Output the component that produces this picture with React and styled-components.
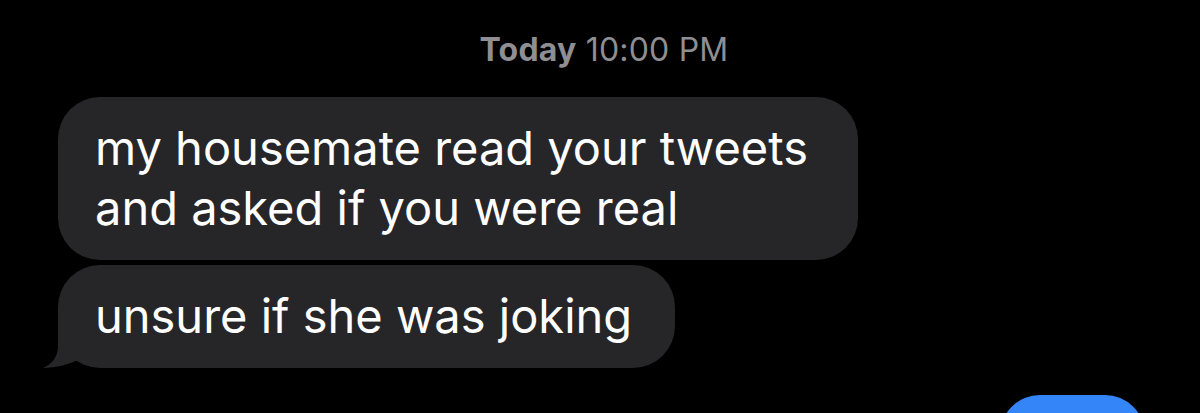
import React from "react";
import styled, { createGlobalStyle } from "styled-components";

const Global = createGlobalStyle`
  html, body { margin: 0; padding: 0; background: #000; }
  body { font-family: Inter, "Liberation Sans", Arial, sans-serif; }
`;

const Screen = styled.div`
  width: 1200px;
  height: 413px;
  overflow: hidden;
  background: #000;
  display: flex;
  flex-direction: column;
`;

const Stamp = styled.div`
  margin-top: 30px;
  padding-left: 8px;
  text-align: center;
  font-size: 32px;
  line-height: 40px;
  letter-spacing: 0.2px;
  color: #8e8e93;
  b { font-weight: 700; }
`;

const Received = styled.div`
  display: flex;
  flex-direction: column;
  align-items: flex-start;
  gap: 5px;
  margin: 27px 0 0 58px;
`;

const Bubble = styled.div`
  position: relative;
  background: #262629;
  color: #fff;
  font-size: 47px;
  line-height: 60px;
  border-radius: 42px;
  padding: 21px ${(p) => p.$right}px 22px 37px;
  white-space: nowrap;
`;

const Tail = styled.svg`
  position: absolute;
  left: -15px;
  bottom: 0;
  width: 40px;
  height: 50px;
`;

const Sent = styled.div`
  align-self: flex-end;
  margin: 27px 55px 0 0;
  width: 145px;
  height: 80px;
  flex-shrink: 0;
  background: #3485f7;
  border-radius: 40px;
`;

export default function App() {
  return (
    <Screen>
      <Global />
      <Stamp>
        <b>Today</b> 10:00 PM
      </Stamp>
      <Received>
        <Bubble $right={50}>
          my housemate read your tweets
          <br />
          and asked if you were real
        </Bubble>
        <Bubble $right={43}>
          unsure if she was joking
          <Tail viewBox="0 0 40 50">
            <path d="M15 0 L15 28 C15 39 9 46 0 50 C12 50 28 46 37 41 L40 41 L40 0 Z" fill="#262629" />
          </Tail>
        </Bubble>
      </Received>
      <Sent />
    </Screen>
  );
}
